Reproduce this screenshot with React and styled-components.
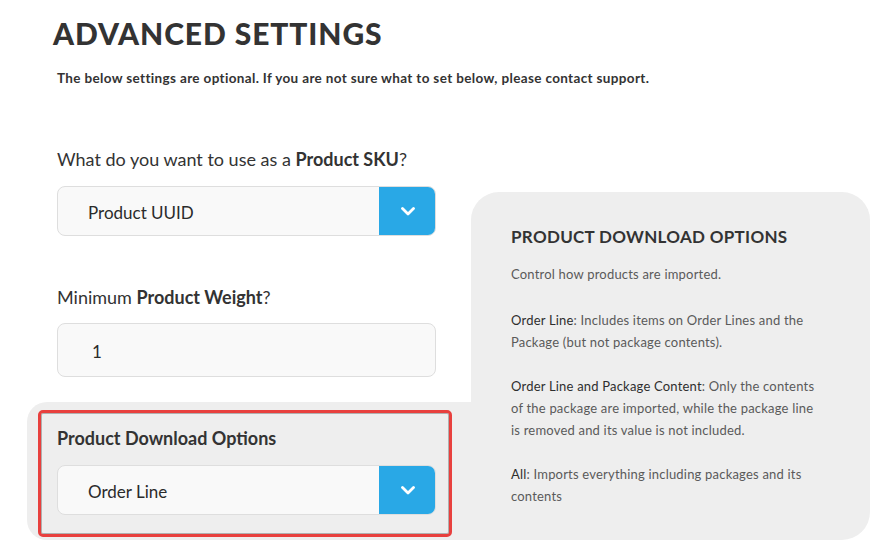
import React from "react";
import styled, { createGlobalStyle } from "styled-components";

const GlobalStyle = createGlobalStyle`
  html, body { margin: 0; padding: 0; background: #ffffff; }
  body {
    font-family: Lato, "Liberation Sans", Arial, sans-serif;
    color: #333333;
    -webkit-font-smoothing: antialiased;
  }
  * { box-sizing: border-box; }
`;

const Page = styled.div`
  width: 893px;
  height: 550px;
  overflow: hidden;
  padding: 15px 0 0 27px;
`;

const Header = styled.header`
  padding-left: 26px;
`;

const Title = styled.h1`
  margin: 0;
  font: 900 30px/36px Lato, "Liberation Sans", sans-serif;
  color: #333333;
  text-transform: uppercase;
  letter-spacing: 0.9px;
`;

const Subtitle = styled.p`
  margin: 18px 0 0 4px;
  font: 700 13.5px/18px Lato, "Liberation Sans", sans-serif;
  letter-spacing: 0.35px;
  color: #333333;
`;

const Layout = styled.div`
  display: grid;
  grid-template-columns: 444px 399px;
  grid-template-rows: auto auto auto;
  margin-top: 60px;
`;

const Field = styled.div`
  grid-column: 1;
  padding: 0 35px 0 30px;
  margin-top: ${(p) => p.$gap || 0}px;
`;

const Label = styled.div`
  font: ${(p) => (p.$strong ? 700 : 400)} 18px/24px Lato, "Liberation Sans", sans-serif;
  color: #333333;
  b { font-weight: 700; }
`;

const SelectBox = styled.div`
  display: flex;
  height: 50px;
  margin-top: 15px;
  border: 1px solid #dedede;
  border-radius: 8px;
  background: #f9f9f9;
  overflow: hidden;
`;

const SelectValue = styled.div`
  flex: 1;
  display: flex;
  align-items: center;
  padding: 2px 0 0 30px;
  font: 400 17px/1 Lato, "Liberation Sans", sans-serif;
  color: #2b2b2b;
`;

const SelectButton = styled.div`
  width: 57px;
  margin: -1px -1px -1px 0;
  background: #29a8e6;
  display: flex;
  align-items: center;
  justify-content: center;
`;

const InputBox = styled.div`
  height: 54px;
  margin-top: 14px;
  border: 1px solid #dedede;
  border-radius: 8px;
  background: #f9f9f9;
  display: flex;
  align-items: center;
  padding: 2px 0 0 34px;
  font: 400 17px/1 Lato, "Liberation Sans", sans-serif;
  color: #2b2b2b;
`;

const HighlightZone = styled.div`
  grid-column: 1;
  grid-row: 3;
  margin-top: 25px;
  background: #eeeeee;
  border-radius: 20px 0 0 20px;
  padding: 8px 19px 3px 11px;
`;

const RedBox = styled.div`
  border: 3px solid #e8403e;
  border-radius: 5px;
  box-shadow: inset 0 0 0 1px rgba(60, 60, 60, 0.35);
  padding: 13px 13px 19px 16px;
`;

const InfoPanel = styled.aside`
  grid-column: 2;
  grid-row: 1 / span 3;
  margin-top: 45px;
  background: #eeeeee;
  border-radius: 28px 28px 28px 0;
  padding: 34px 20px 0 40px;
`;

const InfoTitle = styled.h3`
  margin: 0;
  font: 700 17px/22px Lato, "Liberation Sans", sans-serif;
  letter-spacing: 0.3px;
  color: #333333;
  text-transform: uppercase;
`;

const InfoText = styled.p`
  margin: ${(p) => p.$gap ?? 22}px 0 0;
  font: 400 13px/22px Lato, "Liberation Sans", sans-serif;
  letter-spacing: 0.2px;
  color: #5a5a5a;
  white-space: nowrap;
`;

const Term = styled.span`
  color: #2e2e2e;
`;

const Chevron = () => (
  <svg width="14" height="9" viewBox="0 0 14 9" aria-hidden="true">
    <polyline
      points="1.5,1.5 7,7 12.5,1.5"
      fill="none"
      stroke="#ffffff"
      strokeWidth="2.8"
      strokeLinecap="round"
      strokeLinejoin="round"
    />
  </svg>
);

const Select = ({ value }) => (
  <SelectBox>
    <SelectValue>{value}</SelectValue>
    <SelectButton>
      <Chevron />
    </SelectButton>
  </SelectBox>
);

export default function App() {
  return (
    <>
      <GlobalStyle />
      <Page>
        <Header>
          <Title>Advanced Settings</Title>
          <Subtitle>
            The below settings are optional. If you are not sure what to set below, please contact support.
          </Subtitle>
        </Header>
        <Layout>
          <Field>
            <Label>
              What do you want to use as a <b>Product SKU</b>?
            </Label>
            <Select value="Product UUID" />
          </Field>
          <Field $gap={49}>
            <Label>
              Minimum <b>Product Weight</b>?
            </Label>
            <InputBox>1</InputBox>
          </Field>
          <HighlightZone>
            <RedBox>
              <Label $strong>Product Download Options</Label>
              <Select value="Order Line" />
            </RedBox>
          </HighlightZone>
          <InfoPanel>
            <InfoTitle>Product Download Options</InfoTitle>
            <InfoText $gap={15}>Control how products are imported.</InfoText>
            <InfoText $gap={24}>
              <Term>Order Line</Term>: Includes items on Order Lines and the
              <br />
              Package (but not package contents).
            </InfoText>
            <InfoText>
              <Term>Order Line and Package Content</Term>: Only the contents
              <br />
              of the package are imported, while the package line
              <br />
              is removed and its value is not included.
            </InfoText>
            <InfoText>
              <Term>All</Term>: Imports everything including packages and its
              <br />
              contents
            </InfoText>
          </InfoPanel>
        </Layout>
      </Page>
    </>
  );
}
